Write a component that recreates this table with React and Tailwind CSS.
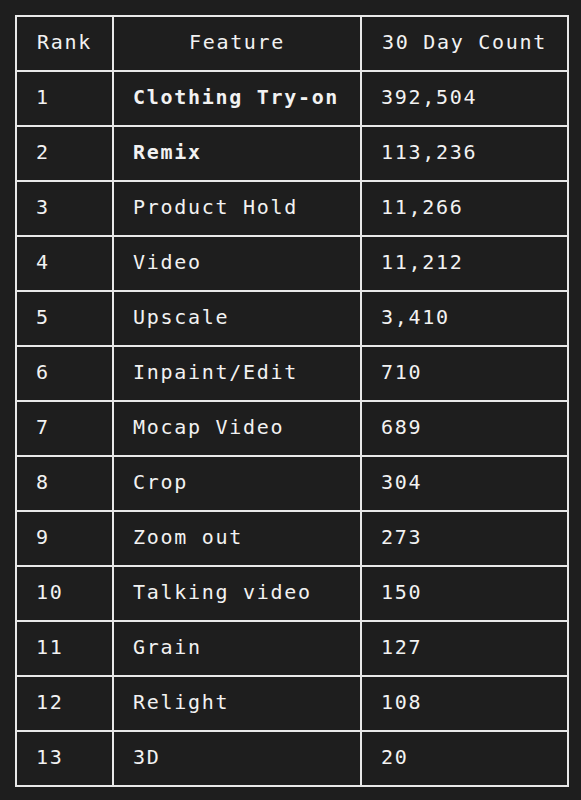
const rows = [
  ["1", "Clothing Try-on", "392,504", true],
  ["2", "Remix", "113,236", true],
  ["3", "Product Hold", "11,266"],
  ["4", "Video", "11,212"],
  ["5", "Upscale", "3,410"],
  ["6", "Inpaint/Edit", "710"],
  ["7", "Mocap Video", "689"],
  ["8", "Crop", "304"],
  ["9", "Zoom out", "273"],
  ["10", "Talking video", "150"],
  ["11", "Grain", "127"],
  ["12", "Relight", "108"],
  ["13", "3D", "20"],
];

export default function App() {
  return (
    <div
      className="min-h-screen w-[581px] bg-[#1e1e1e] pt-[15px] pl-[15px] text-[20px] tracking-[1.7px] text-[#f2f2f2]"
      style={{ fontFamily: '"DejaVu Sans Mono", "Liberation Mono", monospace' }}
    >
      <div className="w-[554px] border-2 border-[#e8e8e8]">
        {/* header */}
        <div className="flex h-[55px] border-b-2 border-[#e8e8e8]">
          <div className="flex w-[97px] items-center justify-center border-r-2 border-[#e8e8e8] pb-[4px]">Rank</div>
          <div className="flex w-[248px] items-center justify-center border-r-2 border-[#e8e8e8] pb-[4px]">Feature</div>
          <div className="flex w-[205px] items-center justify-center pb-[4px]">30 Day Count</div>
        </div>

        {rows.map(([rank, name, count, bold], i) => (
          <div
            key={rank}
            className={
              i < rows.length - 1
                ? "flex h-[55px] border-b-2 border-[#e8e8e8]"
                : "flex h-[53px]"
            }
          >
            <div className="flex w-[97px] items-center border-r-2 border-[#e8e8e8] px-[19px] pb-[4px]">{rank}</div>
            <div
              className={
                bold
                  ? "flex w-[248px] items-center border-r-2 border-[#e8e8e8] px-[19px] pb-[4px] font-bold"
                  : "flex w-[248px] items-center border-r-2 border-[#e8e8e8] px-[19px] pb-[4px]"
              }
            >
              {name}
            </div>
            <div className="flex w-[205px] items-center px-[19px] pb-[4px]">{count}</div>
          </div>
        ))}
      </div>
    </div>
  );
}
